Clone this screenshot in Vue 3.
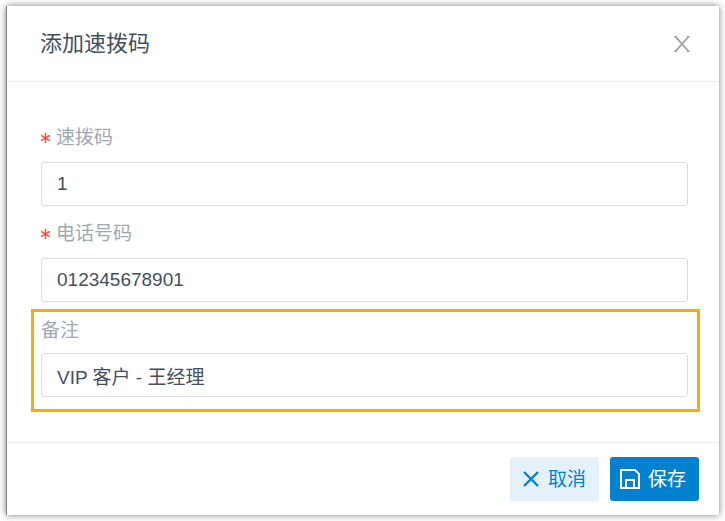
<template>
  <div class="page">
    <form class="dialog" role="dialog" aria-labelledby="dialog-title" @submit.prevent>
      <header class="dialog-header">
        <h1 id="dialog-title">添加速拨码</h1>
        <button type="button" class="close" aria-label="关闭">
          <svg width="16" height="16" viewBox="0 0 16 16" fill="none" stroke="currentColor">
            <path d="M1.2 .3L14.8 15.7M14.8 .3L1.2 15.7" stroke-width="1.8" />
            <path d="M0 .5h3M13 .5h3M0 15.5h3M13 15.5h3" />
          </svg>
        </button>
      </header>

      <main class="dialog-body">
        <div
          v-for="field in fields"
          :key="field.id"
          class="field"
          :class="{ highlight: field.highlight }"
        >
          <label :for="field.id">
            <svg v-if="field.required" class="star" width="10" height="10" viewBox="0 0 10 10">
              <path d="M4.5 0v10M.2 2.4l8.6 5.2M8.8 2.4l-8.6 5.2" stroke="currentColor" stroke-width="1.5" />
            </svg>
            {{ field.label }}
          </label>
          <input :id="field.id" v-model="field.value" type="text" :required="field.required" />
        </div>
      </main>

      <footer class="dialog-footer">
        <button type="button" class="btn cancel">
          <svg width="20" height="20" viewBox="0 0 20 20" fill="none" stroke="currentColor">
            <path d="M4 3l14 14M18 3L4 17" stroke-width="2.4" />
          </svg>
          <span>取消</span>
        </button>
        <button type="submit" class="btn save">
          <svg width="20" height="20" viewBox="0 0 20 20" fill="none" stroke="currentColor">
            <path d="M1 1h14l4 4v14H1z" stroke-width="2" />
            <path d="M6 19v-8h8v8" stroke-width="2" />
          </svg>
          <span>保存</span>
        </button>
      </footer>
    </form>
  </div>
</template>

<script setup>
import { ref } from 'vue'

const fields = ref([
  { id: 'code', label: '速拨码', value: '1', required: true },
  { id: 'phone', label: '电话号码', value: '012345678901', required: true },
  { id: 'remark', label: '备注', value: 'VIP 客户 - 王经理', highlight: true }
])
</script>

<style>
body {
  margin: 0;
  background: #fff;
}
</style>

<style scoped>
.page {
  padding: 6px;
  font-family: "Liberation Sans", "Noto Sans CJK SC", sans-serif;
  font-size: 19px;
  color: #44505f;
}

.dialog {
  border-left: 1px solid #808080;
  background: #fff;
  box-shadow: 0 0 7px rgba(0, 0, 0, 0.5);
}

.dialog-header {
  display: flex;
  align-items: center;
  justify-content: space-between;
  height: 75px;
  padding: 0 29px 0 33px;
  border-bottom: 1px solid #ededee;
}

.dialog-header h1 {
  margin: 0;
  font-size: 22px;
  font-weight: 400;
  line-height: 32px;
}

button {
  font-family: inherit;
  border: none;
  cursor: pointer;
}

.close {
  display: flex;
  padding: 0;
  background: none;
  color: #9fa5ad;
}

.dialog-body {
  padding: 42px 31px 30px 34px;
}

.field {
  display: flex;
  flex-direction: column;
  gap: 10px;
  margin-bottom: 14px;
}

.field label {
  display: flex;
  align-items: center;
  gap: 5px;
  line-height: 28px;
  color: #a2a8b0;
}

.star {
  color: #f2563d;
}

.field input {
  box-sizing: border-box;
  width: 100%;
  height: 44px;
  padding: 0 15px;
  border: 1px solid #dcdee0;
  border-radius: 3px;
  outline: none;
  background: #fff;
  font-family: inherit;
  font-size: 19px;
  color: inherit;
}

.highlight {
  gap: 8px;
  margin: -7px -12px 0 -10px;
  padding: 5px 9px 12px 7px;
  border: 3px solid #faad0a;
}

.dialog-footer {
  display: flex;
  justify-content: flex-end;
  gap: 11px;
  padding: 14px 20px;
  border-top: 1px solid #ededee;
}

.btn {
  display: flex;
  align-items: center;
  gap: 8px;
  height: 44px;
  padding: 0 13px 0 10px;
  border-radius: 3px;
  font-size: 19px;
}

.btn span {
  padding-bottom: 3px;
}

.cancel {
  background: #e5f1fa;
  color: #0081cc;
  box-shadow: 0 2px 2px rgba(0, 0, 0, 0.03);
}

.save {
  background: #0081cf;
  color: #fff;
}
</style>
